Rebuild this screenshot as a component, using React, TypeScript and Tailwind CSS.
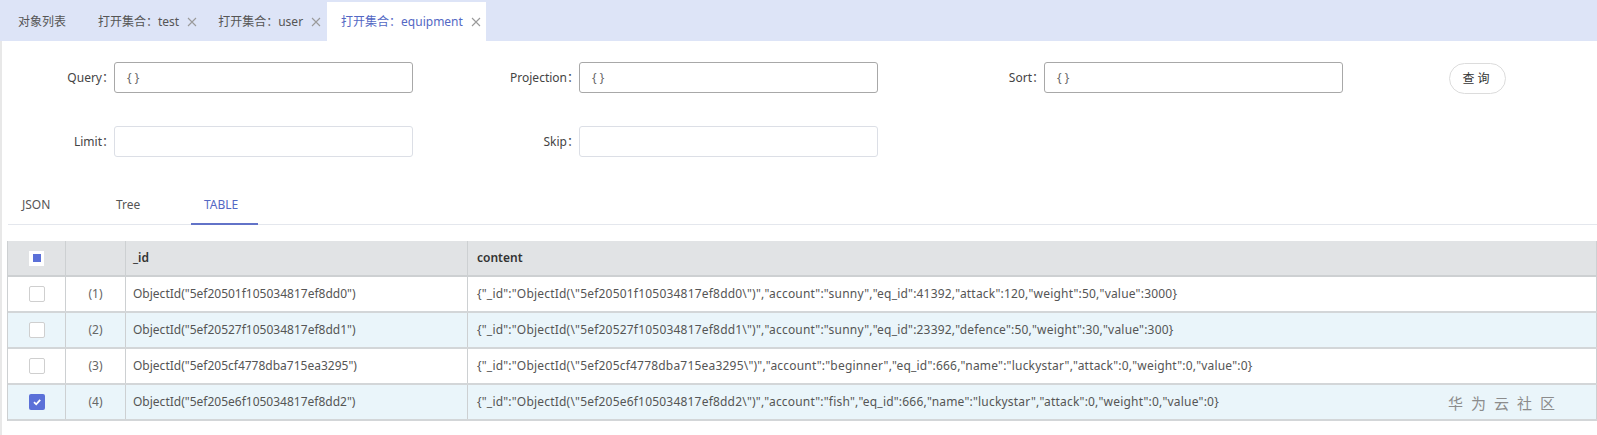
import { ReactNode } from "react";

const FONT = "font-['Noto_Sans','Noto_Sans_CJK_SC',sans-serif]";

interface Row {
  id: string;
  content: string;
  checked?: boolean;
}

const ROWS: Row[] = [
  {
    id: 'ObjectId("5ef20501f105034817ef8dd0")',
    content:
      '{"_id":"ObjectId(\\"5ef20501f105034817ef8dd0\\")","account":"sunny","eq_id":41392,"attack":120,"weight":50,"value":3000}',
  },
  {
    id: 'ObjectId("5ef20527f105034817ef8dd1")',
    content:
      '{"_id":"ObjectId(\\"5ef20527f105034817ef8dd1\\")","account":"sunny","eq_id":23392,"defence":50,"weight":30,"value":300}',
  },
  {
    id: 'ObjectId("5ef205cf4778dba715ea3295")',
    content:
      '{"_id":"ObjectId(\\"5ef205cf4778dba715ea3295\\")","account":"beginner","eq_id":666,"name":"luckystar","attack":0,"weight":0,"value":0}',
  },
  {
    id: 'ObjectId("5ef205e6f105034817ef8dd2")',
    content:
      '{"_id":"ObjectId(\\"5ef205e6f105034817ef8dd2\\")","account":"fish","eq_id":666,"name":"luckystar","attack":0,"weight":0,"value":0}',
    checked: true,
  },
];

const GRID = "grid grid-cols-[58px_60px_342px_1fr]";

function CloseIcon() {
  return (
    <svg width="10" height="10" viewBox="0 0 10 10" className="ml-[8px]">
      <path d="M1 1L9 9M9 1L1 9" stroke="#9a9a9a" strokeWidth="1.1" fill="none" />
    </svg>
  );
}

function Tab({ label, active, closable, className }: { label: string; active?: boolean; closable?: boolean; className: string }) {
  return (
    <div
      className={`flex h-[39px] items-center ${className} ${
        active ? "bg-white text-[#5468c4]" : "text-[#555]"
      }`}
    >
      <span>{label}</span>
      {closable && <CloseIcon />}
    </div>
  );
}

function Field({ label, placeholder, dark }: { label: string; placeholder?: string; dark?: boolean }) {
  return (
    <div className="flex w-[465px] shrink-0 items-center">
      <label className="w-[112px] text-right text-[#444]">{label}</label>
      <div
        className={`flex h-[31px] w-[299px] items-center rounded-[3px] border bg-white pl-[12px] text-[#666] ${
          dark ? "border-[#a8a8a8]" : "border-[#dcdfe6]"
        }`}
      >
        {placeholder}
      </div>
    </div>
  );
}

function Checkbox({ state }: { state: "off" | "on" | "partial" }) {
  if (state === "on") {
    return (
      <span className="flex h-[16px] w-[16px] items-center justify-center rounded-[2px] bg-[#5b70d8]">
        <svg width="10" height="10" viewBox="0 0 10 10">
          <path d="M2 5.2L4.2 7.3L8.2 2.8" stroke="#fff" strokeWidth="1.8" fill="none" />
        </svg>
      </span>
    );
  }
  if (state === "partial") {
    return (
      <span className="flex h-[15px] w-[15px] items-center justify-center bg-white">
        <span className="h-[8px] w-[8px] bg-[#5b70d8]" />
      </span>
    );
  }
  return <span className="h-[16px] w-[16px] rounded-[2px] border border-[#cfcfcf] bg-white" />;
}

function Cell({ children, className = "" }: { children?: ReactNode; className?: string }) {
  return <div className={`flex items-center border-r border-[#cdd0d2] ${className}`}>{children}</div>;
}

export default function App() {
  return (
    <div className={`relative h-[435px] w-full overflow-hidden bg-white text-[12px] ${FONT}`}>
      {/* open collection tabs */}
      <div className="flex h-[41px] items-end bg-[#dde4f7] pl-[4px]">
        <Tab label="对象列表" className="pl-[14px] pr-[18px]" />
        <Tab label="打开集合：test" closable className="pl-[14px] pr-[6px]" />
        <Tab label="打开集合：user" closable className="ml-[1px] pl-[14px] pr-[6px]" />
        <Tab label="打开集合：equipment" active closable className="pl-[14px] pr-[5px]" />
      </div>

      <div className="h-[394px] border-l-2 border-[#e8e8e8]">
        {/* query form */}
        <div className="flex pt-[20px]">
          <Field label="Query：" placeholder="{ }" dark />
          <Field label="Projection：" placeholder="{ }" dark />
          <Field label="Sort：" placeholder="{ }" dark />
          <button className="ml-[52px] mt-[2px] h-[31px] w-[57px] shrink-0 rounded-full border border-[#dcdcdc] bg-white text-[12px] tracking-[3px] text-[#333]">
            查询
          </button>
        </div>
        <div className="mt-[32px] flex">
          <Field label="Limit：" />
          <Field label="Skip：" />
        </div>

        {/* view tabs */}
        <div className="ml-[6px] mt-[29px] flex border-b border-[#e4e7ed] text-[#555]">
          <div className="flex h-[38px] w-[96px] items-center pl-[14px]">JSON</div>
          <div className="flex h-[38px] w-[87px] items-center pl-[12px]">Tree</div>
          <div className="-mb-px flex h-[39px] w-[67px] items-center border-b-2 border-[#6273c8] pl-[13px] text-[#5468c4]">
            TABLE
          </div>
        </div>

        {/* result table */}
        <div className="ml-[5px] mt-[16px] border-l border-[#cdd0d2] text-[#555]">
          <div className={`${GRID} h-[36px] border-b-2 border-[#cdd0d2] bg-[#e1e3e5] font-semibold text-[#333]`}>
            <Cell className="justify-center">
              <Checkbox state="partial" />
            </Cell>
            <Cell />
            <Cell className="pl-[7px]">_id</Cell>
            <Cell className="pl-[9px]">content</Cell>
          </div>
          {ROWS.map((r, i) => (
            <div
              key={r.id}
              className={`${GRID} h-[36px] border-b-2 border-[#d3d6d8] ${i % 2 === 1 ? "bg-[#eaf5fa]" : "bg-white"}`}
            >
              <Cell className="justify-center">
                <Checkbox state={r.checked ? "on" : "off"} />
              </Cell>
              <Cell className="justify-center text-[#666]">({i + 1})</Cell>
              <Cell className="pl-[7px]">{r.id}</Cell>
              <Cell className="whitespace-nowrap pl-[9px] tracking-[0.2px]">{r.content}</Cell>
            </div>
          ))}
        </div>
      </div>

      <div className="absolute right-[34px] top-[392px] text-[15px] tracking-[8px] text-[#8c8c8c]">华为云社区</div>
    </div>
  );
}
